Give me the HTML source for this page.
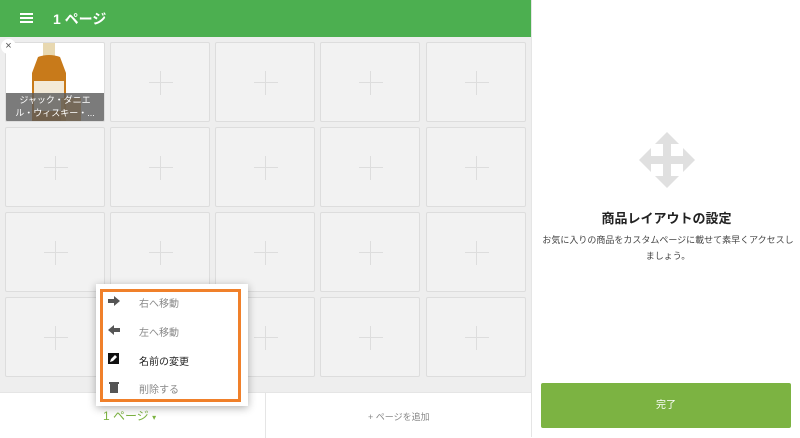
<!DOCTYPE html>
<html><head><meta charset="utf-8"><style>
*{box-sizing:border-box;margin:0;padding:0}
body{width:800px;height:437px;overflow:hidden;background:#fff;font-family:"Liberation Sans","Noto Sans CJK JP",sans-serif;position:relative}
.left{position:absolute;left:0;top:0;width:531px;height:437px;background:#eeeeee}
.hdr{position:absolute;left:0;top:0;width:531px;height:37px;background:#4caf50;color:#fff}
.hdr .t{position:absolute;left:53px;top:9px;font-size:14px;font-weight:bold}
.ham{position:absolute;left:20px;top:13px;width:13px;height:2px;background:#fff;box-shadow:0 4px 0 #fff,0 8px 0 #fff}
.cell{position:absolute;width:100px;height:80px;background:#f2f2f2;border:1px solid #ddd;border-radius:2px}
.cell:not(.img)::before{content:"";position:absolute;left:38px;top:39px;width:24px;height:1px;background:#ddd}
.cell:not(.img)::after{content:"";position:absolute;left:49px;top:28px;width:1px;height:24px;background:#ddd}
.img{background:#fff;overflow:hidden}
.cap{position:absolute;left:0;bottom:0;width:100%;height:28px;background:rgba(90,90,90,.8);color:#fff;font-size:9px;line-height:13px;text-align:center;padding-top:1px}
.x{position:absolute;left:1px;top:39px;width:15px;height:15px;border-radius:50%;background:#fff;font-size:11px;line-height:14px;text-align:center;color:#555;z-index:2}
.bot{position:absolute;left:0;top:392px;width:531px;height:45px;background:#fff;border-top:1px solid #e5e5e5}
.bot .d{position:absolute;left:265px;top:0;width:1px;height:45px;background:#e5e5e5}
.right{position:absolute;left:531px;top:0;width:269px;height:437px;background:#fff;border-left:1px solid #e5e5e5}
.btn{position:absolute;left:541px;top:383px;width:250px;height:45px;background:#7cb342;color:#fff;font-size:10px;text-align:center;line-height:45px;border-radius:2px}
.menu{position:absolute;left:96px;top:284px;width:152px;height:122px;background:#fff;box-shadow:0 2px 8px rgba(0,0,0,.3)}
.menu .ob{position:absolute;left:4px;top:5px;width:141px;height:113px;border:3px solid #f0802a}
.mi{position:absolute;left:43px;font-size:10px;color:#888}
</style></head><body>
<div class="left">
<div class="hdr"><div class="ham"></div><div class="t">1 ページ</div></div>
<div class="x">×</div>
<div class="cell img" style="left:5px;top:42px">
<svg width="100" height="80" style="position:absolute;left:0;top:0"><rect x="37" y="0" width="12" height="14" fill="#e8d8b0"/><path d="M32 14 Q43 10 54 14 L60 30 L60 80 L26 80 L26 30Z" fill="#c87a1a"/><rect x="28" y="38" width="30" height="30" fill="#f3ead8"/><rect x="55" y="55" width="20" height="25" fill="#d9912a" opacity=".8"/></svg>
<div class="cap">ジャック・ダニエ<br>ル・ウィスキー・...</div></div>
<div class="cell" style="left:110px;top:42px"></div><div class="cell" style="left:215px;top:42px"></div><div class="cell" style="left:320px;top:42px"></div><div class="cell" style="left:426px;top:42px"></div>
<div class="cell" style="left:5px;top:127px"></div><div class="cell" style="left:110px;top:127px"></div><div class="cell" style="left:215px;top:127px"></div><div class="cell" style="left:320px;top:127px"></div><div class="cell" style="left:426px;top:127px"></div>
<div class="cell" style="left:5px;top:212px"></div><div class="cell" style="left:110px;top:212px"></div><div class="cell" style="left:215px;top:212px"></div><div class="cell" style="left:320px;top:212px"></div><div class="cell" style="left:426px;top:212px"></div>
<div class="cell" style="left:5px;top:297px"></div><div class="cell" style="left:110px;top:297px"></div><div class="cell" style="left:215px;top:297px"></div><div class="cell" style="left:320px;top:297px"></div><div class="cell" style="left:426px;top:297px"></div>
<div class="bot"><div class="d"></div>
<div style="position:absolute;left:103px;top:14px;font-size:12px;color:#7cb342">1 ページ <span style="font-size:8px">▾</span></div>
<div style="position:absolute;left:368px;top:17px;font-size:9px;color:#888">+ ページを追加</div></div>
</div>
<div class="right">
<svg width="56" height="56" viewBox="0 0 56 56" style="position:absolute;left:107px;top:132px"><path fill="#e0e0e0" d="M28 0 L40 12 L32 12 L32 24 L44 24 L44 16 L56 28 L44 40 L44 32 L32 32 L32 44 L40 44 L28 56 L16 44 L24 44 L24 32 L12 32 L12 40 L0 28 L12 16 L12 24 L24 24 L24 12 L16 12Z"/></svg>
<div style="position:absolute;left:0;width:269px;top:208px;text-align:center;font-size:13px;font-weight:bold;color:#222">商品レイアウトの設定</div>
<div style="position:absolute;left:8px;width:256px;top:232px;text-align:center;font-size:9px;line-height:16px;color:#444">お気に入りの商品をカスタムページに載せて素早くアクセスしましょう。</div>
</div>
<div class="btn">完了</div>
<div class="menu"><div class="ob"></div>
<svg width="12" height="10" style="position:absolute;left:12px;top:12px"><path d="M0 3h6V0l6 5-6 5V7H0z" fill="#555"/></svg>
<div class="mi" style="top:11px">右へ移動</div>
<svg width="12" height="10" style="position:absolute;left:12px;top:41px"><path d="M12 3H6V0L0 5l6 5V7h6z" fill="#555"/></svg>
<div class="mi" style="top:40px">左へ移動</div>
<svg width="11" height="11" style="position:absolute;left:12px;top:69px"><rect width="11" height="11" fill="#111"/><path d="M2 9l1-3 4-4 2 2-4 4z" fill="#fff"/></svg>
<div class="mi" style="top:69px;color:#222">名前の変更</div>
<svg width="10" height="12" style="position:absolute;left:13px;top:97px"><rect x="0" y="1" width="10" height="2" fill="#555"/><rect x="1" y="3" width="8" height="9" fill="#555"/></svg>
<div class="mi" style="top:97px">削除する</div>
</div>
</body></html>
